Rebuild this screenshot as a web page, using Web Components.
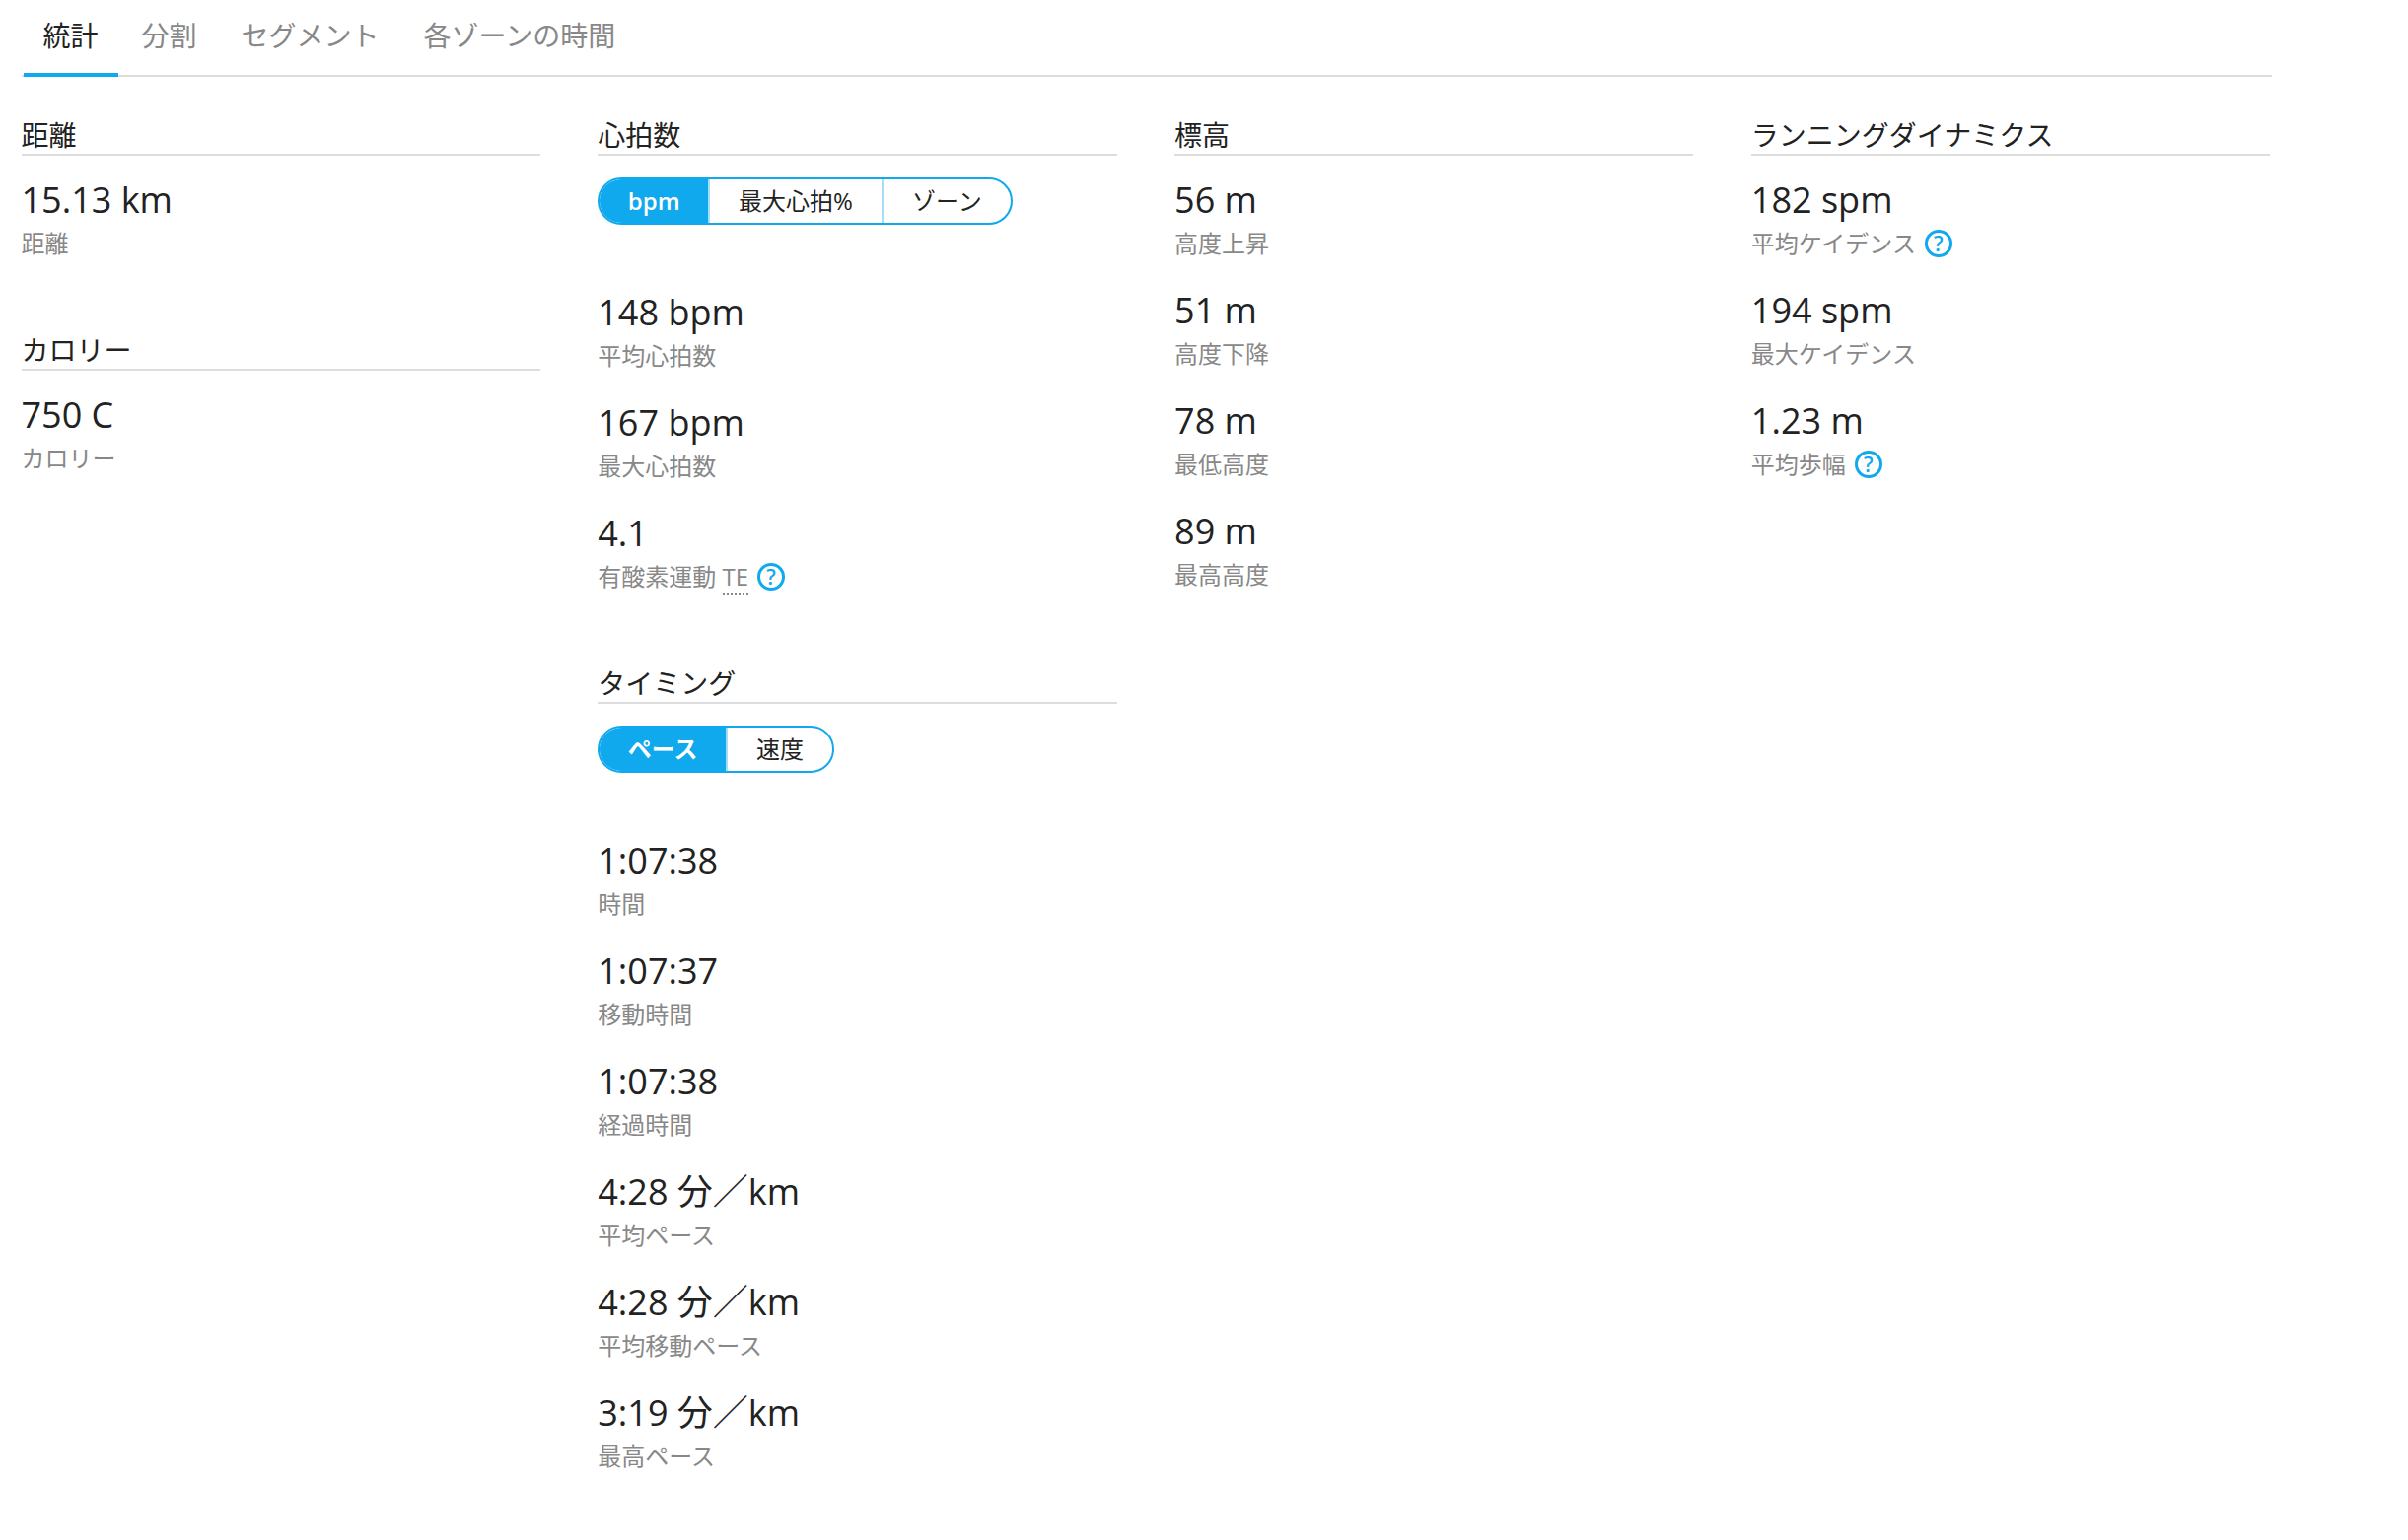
<!DOCTYPE html>
<html lang="ja">
<head>
<meta charset="utf-8">
<title>統計</title>
<style>
  html, body { margin: 0; background: #fff; }
  body { font-family: "Open Sans", "Noto Sans CJK JP", sans-serif; color: #222; }
</style>
</head>
<body>
<activity-stats>
  <stat-tabs slot="tabs" items="統計,分割,セグメント,各ゾーンの時間"></stat-tabs>

  <stat-column>
    <stat-section heading="距離">
      <stat-item value="15.13 km">距離</stat-item>
    </stat-section>
    <stat-section heading="カロリー">
      <stat-item value="750 C">カロリー</stat-item>
    </stat-section>
  </stat-column>

  <stat-column>
    <stat-section heading="心拍数">
      <pill-toggle slot="toggle" options="bpm,最大心拍%,ゾーン"></pill-toggle>
      <stat-item value="148 bpm">平均心拍数</stat-item>
      <stat-item value="167 bpm">最大心拍数</stat-item>
      <stat-item value="4.1">有酸素運動 <dotted-abbr>TE</dotted-abbr><help-icon></help-icon></stat-item>
    </stat-section>
    <stat-section heading="タイミング">
      <pill-toggle slot="toggle" options="ペース,速度"></pill-toggle>
      <stat-item value="1:07:38">時間</stat-item>
      <stat-item value="1:07:37">移動時間</stat-item>
      <stat-item value="1:07:38">経過時間</stat-item>
      <stat-item value="4:28 分／km">平均ペース</stat-item>
      <stat-item value="4:28 分／km">平均移動ペース</stat-item>
      <stat-item value="3:19 分／km">最高ペース</stat-item>
    </stat-section>
  </stat-column>

  <stat-column>
    <stat-section heading="標高">
      <stat-item value="56 m">高度上昇</stat-item>
      <stat-item value="51 m">高度下降</stat-item>
      <stat-item value="78 m">最低高度</stat-item>
      <stat-item value="89 m">最高高度</stat-item>
    </stat-section>
  </stat-column>

  <stat-column>
    <stat-section heading="ランニングダイナミクス">
      <stat-item value="182 spm">平均ケイデンス<help-icon></help-icon></stat-item>
      <stat-item value="194 spm">最大ケイデンス</stat-item>
      <stat-item value="1.23 m">平均歩幅<help-icon></help-icon></stat-item>
    </stat-section>
  </stat-column>
</activity-stats>

<script>
  //page frame: tab bar on top, four columns under it
  class ActivityStats extends HTMLElement {
    constructor() {
      super();
      this.attachShadow({ mode: "open" });
      this.shadowRoot.innerHTML = `
      <style>
        :host { display: block; width: 2304px; padding-left: 21.5px; box-sizing: border-box; }
        .grid {
          display: grid;
          grid-template-columns: repeat(4, 526.4px);
          column-gap: 58.4px;
          padding-top: 40px;
        }
      </style>
      <slot name="tabs"></slot>
      <div class="grid"><slot></slot></div>
      `;
    }
  }

  class StatTabs extends HTMLElement {
    constructor() {
      super();
      this.attachShadow({ mode: "open" });
    }
    connectedCallback() {
      const items = (this.getAttribute("items") || "").split(",");
      this.shadowRoot.innerHTML = `
      <style>
        :host { display: flex; height: 78px; box-sizing: border-box; border-bottom: 2px solid #ddd; padding-left: 2px; }
        div {
          height: 78px;
          box-sizing: border-box;
          padding: 18px 20px 0;
          margin-right: 5px;
          font-size: 28px;
          line-height: 36px;
          color: #888;
        }
        div.on { color: #222; border-bottom: 4px solid #11a9ed; margin-right: 4px; }
      </style>
      ${items.map((t, i) => `<div class="${i === 0 ? "on" : ""}">${t}</div>`).join("")}
      `;
    }
  }

  class StatColumn extends HTMLElement {
    constructor() {
      super();
      this.attachShadow({ mode: "open" });
      this.shadowRoot.innerHTML = `
      <style>
        :host { display: flex; flex-direction: column; gap: 72.5px; }
      </style>
      <slot></slot>
      `;
    }
  }

  class StatSection extends HTMLElement {
    constructor() {
      super();
      this.attachShadow({ mode: "open" });
    }
    connectedCallback() {
      this.shadowRoot.innerHTML = `
      <style>
        :host { display: block; }
        h3 {
          margin: 0 0 22px;
          height: 38px;
          font-size: 28px;
          font-weight: 400;
          line-height: 38px;
          color: #222;
          border-bottom: 2px solid #ddd;
        }
        .items { display: flex; flex-direction: column; gap: 30px; padding-top: 1px; }
      </style>
      <h3>${this.getAttribute("heading") || ""}</h3>
      <slot name="toggle"></slot>
      <div class="items"><slot></slot></div>
      `;
    }
  }

  class StatItem extends HTMLElement {
    constructor() {
      super();
      this.attachShadow({ mode: "open" });
    }
    connectedCallback() {
      this.shadowRoot.innerHTML = `
      <style>
        :host { display: block; }
        .value { font-size: 36px; line-height: 44px; color: #222; }
        .label {
          margin-top: 6px;
          display: flex;
          align-items: center;
          height: 32px;
          font-size: 24px;
          line-height: 32px;
          color: #888;
          white-space: pre;
        }
      </style>
      <div class="value">${this.getAttribute("value") || ""}</div>
      <div class="label"><slot></slot></div>
      `;
    }
  }

  class PillToggle extends HTMLElement {
    constructor() {
      super();
      this.attachShadow({ mode: "open" });
    }
    connectedCallback() {
      const options = (this.getAttribute("options") || "").split(",");
      this.shadowRoot.innerHTML = `
      <style>
        :host {
          display: flex;
          width: max-content;
          height: 48px;
          box-sizing: border-box;
          margin-bottom: 66px;
          border: 2px solid #11a9ed;
          border-radius: 24px;
          overflow: hidden;
          font-size: 24px;
        }
        span {
          display: block;
          padding: 0 29px;
          line-height: 43px;
          color: #222;
          border-left: 2px solid #a6def7;
        }
        span:first-of-type { border-left: 0; padding: 0 28.5px; }
        span.on { background: #11a9ed; color: #fff; font-weight: 600; }
      </style>
      ${options.map((t, i) => `<span class="${i === 0 ? "on" : ""}">${t}</span>`).join("")}
      `;
    }
  }

  class DottedAbbr extends HTMLElement {
    constructor() {
      super();
      this.attachShadow({ mode: "open" });
      this.shadowRoot.innerHTML = `<style>
        :host { display: block; align-self: flex-start; height: 32px; border-bottom: 2px dotted #888; white-space: normal; }
      </style><slot></slot>`;
    }
  }

  class HelpIcon extends HTMLElement {
    constructor() {
      super();
      this.attachShadow({ mode: "open" });
      this.shadowRoot.innerHTML = `<style>
        :host {
          display: flex;
          align-items: center;
          justify-content: center;
          width: 28px;
          height: 28px;
          box-sizing: border-box;
          margin-left: 9px;
          border: 3px solid #11a9ed;
          border-radius: 50%;
          color: #11a9ed;
          font-size: 21px;
          font-weight: 600;
          line-height: 1;
          white-space: normal;
        }
      </style>?`;
    }
  }

  customElements.define("activity-stats", ActivityStats);
  customElements.define("stat-tabs", StatTabs);
  customElements.define("stat-column", StatColumn);
  customElements.define("stat-section", StatSection);
  customElements.define("stat-item", StatItem);
  customElements.define("pill-toggle", PillToggle);
  customElements.define("dotted-abbr", DottedAbbr);
  customElements.define("help-icon", HelpIcon);
</script>
</body>
</html>
